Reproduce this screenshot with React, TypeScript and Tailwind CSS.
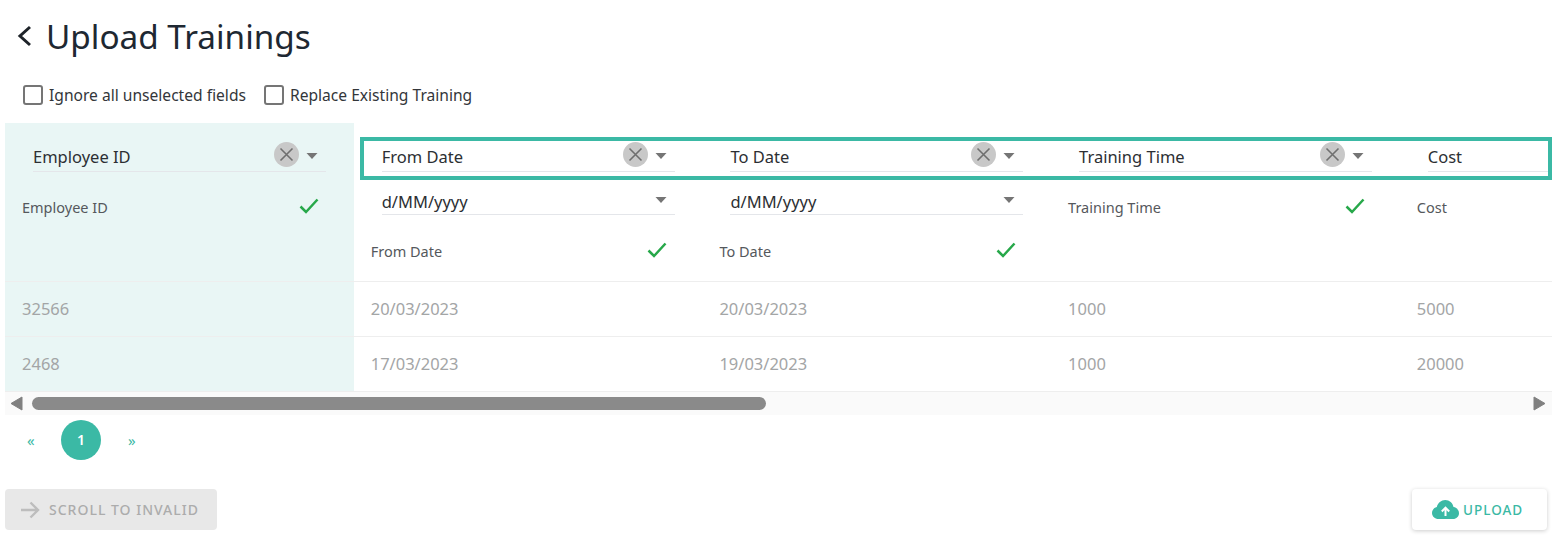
const columns = [
  { name: "Employee ID", format: "", rows: ["32566", "2468"], frozen: true },
  { name: "From Date", format: "d/MM/yyyy", rows: ["20/03/2023", "17/03/2023"] },
  { name: "To Date", format: "d/MM/yyyy", rows: ["20/03/2023", "19/03/2023"] },
  { name: "Training Time", format: "", rows: ["1000", "1000"] },
  { name: "Cost", format: "", rows: ["5000", "20000"], noClear: true },
];

const Caret = () => (
  <svg width="12" height="6" viewBox="0 0 12 6" className="shrink-0">
    <path d="M0.500 0h11L6 6z" fill="#757575" />
  </svg>
);

const Check = () => (
  <svg width="20" height="16" viewBox="0 0 20 16" className="shrink-0">
    <path d="M1.500 8.500 7 14 18.500 1.500" fill="none" stroke="#27a84a" strokeWidth="2.500" />
  </svg>
);

const ClearIcon = () => (
  <span className="mb-[2px] flex h-[25px] w-[25px] shrink-0 items-center justify-center rounded-full bg-[#c8c8c8]">
    <svg width="15" height="15" viewBox="0 0 15 15">
      <path d="M1.500 1.500l12 12M13.500 1.500l-12 12" stroke="#6f6f6f" strokeWidth="1.600" fill="none" />
    </svg>
  </span>
);

const HeaderSelect = ({ value, clear }: { value: string; clear?: boolean }) => (
  <div className="ml-[28px] flex h-[32px] w-[293px] items-center border-b border-[#e4e6ea] pr-[8px] text-[16.500px] text-[#2c2f33]">
    <span className="flex-1 pt-[3px]">{value}</span>
    {clear && <ClearIcon />}
    <span className="ml-[7px] flex">
      <Caret />
    </span>
  </div>
);

const FormatSelect = ({ value }: { value: string }) => (
  <div className="ml-[28px] mt-[15px] flex h-[28px] w-[293px] items-center border-b border-[#e4e6ea] pr-[8px] pt-[3px] text-[16.500px] text-[#2c2f33]">
    <span className="flex-1">{value}</span>
    <span className="mb-[5px] flex">
      <Caret />
    </span>
  </div>
);

const Checkbox = ({ label }: { label: string }) => (
  <label className="flex items-center gap-[6px] text-[15.600px] text-[#33363a]">
    <span className="h-[20px] w-[20px] rounded-[3px] border-2 border-[#757575] bg-white" />
    <span className="pt-[2px]">{label}</span>
  </label>
);

const Column = ({ col }: { col: (typeof columns)[number] }) => (
  <div className={`w-[348.700px] shrink-0 ${col.frozen ? "bg-[#e9f6f5]" : "bg-white"}`}>
    <div className="h-[159px] border-b border-[#eeeeee] pt-[17px]">
      <HeaderSelect value={col.name} clear={!col.noClear} />
      {col.format && <FormatSelect value={col.format} />}
      <div
        className={`flex h-[44px] items-center justify-between pl-[17px] pr-[35px] text-[14.500px] text-[#55585c] ${
          col.format ? "mt-[15px]" : "mt-[14px]"
        }`}
      >
        <span>{col.name}</span>
        <span className="mb-[4px] flex">
          <Check />
        </span>
      </div>
    </div>
    {col.rows.map((row) => (
      <div
        key={row}
        className="flex h-[55px] items-center border-b border-[#eeeeee] pl-[17px] text-[16.500px] text-[#a3a5a6]"
      >
        {row}
      </div>
    ))}
  </div>
);

export default function App() {
  return (
    <div className="h-[538px] w-[1552px] overflow-hidden bg-white font-['Noto_Sans',sans-serif]">
      <div className="flex h-[73px] items-center pl-[17px]">
        <svg width="15" height="22" viewBox="0 0 15 22" className="mb-[2px]">
          <path d="M13 2 3 11l10 9" fill="none" stroke="#1e2329" strokeWidth="3" />
        </svg>
        <h1 className="ml-[14px] text-[33.300px] leading-none text-[#1e2832]">Upload Trainings</h1>
      </div>
      <div className="flex h-[44px] items-center gap-[18px] pl-[23px]">
        <Checkbox label="Ignore all unselected fields" />
        <Checkbox label="Replace Existing Training" />
      </div>
      <div className="relative ml-[5px] mt-[6px] w-[1547px] overflow-hidden">
        <div className="flex">
          {columns.map((col) => (
            <Column key={col.name} col={col} />
          ))}
        </div>
        <div className="absolute left-[355px] top-[14px] h-[43px] w-[1192px] border-[4px] border-[#3bb9a5]" />
      </div>
      <div className="ml-[5px] flex h-[23px] w-[1547px] items-center bg-[#fafafa]">
        <svg width="13" height="15" viewBox="0 0 13 15" className="ml-[5px]">
          <path d="M12 1v13L1 7.500z" fill="#808080" stroke="#808080" strokeLinejoin="round" />
        </svg>
        <div className="ml-[9px] h-[13px] w-[734px] rounded-full bg-[#8a8a8a]" />
        <svg width="13" height="15" viewBox="0 0 13 15" className="ml-auto mr-[6px]">
          <path d="M1 1v13l11-6.500z" fill="#808080" stroke="#808080" strokeLinejoin="round" />
        </svg>
      </div>
      <div className="mt-[4px] flex h-[41px] items-center text-[15px] text-[#3bb9a5]">
        <span className="ml-[27px] w-[34px] pt-[1px]">«</span>
        <span className="flex h-[40px] w-[40px] items-center justify-center rounded-full bg-[#3bb9a5] text-[14px] font-semibold text-white">
          1
        </span>
        <span className="ml-[27px] pt-[1px]">»</span>
      </div>
      <div className="mt-[29px] flex items-start justify-between pl-[5px] pr-[5px]">
        <button className="flex h-[41px] w-[212px] items-center rounded-[4px] bg-[#e8e8e8] pl-[15px] text-[14px] font-medium tracking-[1px] text-[#acacac]">
          <svg width="20" height="18" viewBox="0 0 20 18">
            <path d="M1 9h17M10.500 1.500 18 9l-7.500 7.500" fill="none" stroke="#bdbdbd" strokeWidth="2.400" />
          </svg>
          <span className="ml-[9px]">SCROLL TO INVALID</span>
        </button>
        <button className="flex h-[41px] w-[135px] items-center rounded-[4px] bg-white pl-[20px] text-[13.500px] font-medium tracking-[1px] text-[#3bb9a5] shadow-[0_1px_4px_rgba(0,0,0,0.2)]">
          <svg width="27" height="19" viewBox="0 0 27 19">
            <path
              d="M6.500 19C3 19 0 16.400 0 13c0-2.900 2-5.300 4.800-6C5.800 3 9.200 0 13.200 0c4.200 0 7.700 3.100 8.300 7.100C24.600 7.500 27 10 27 13.200 27 16.400 24.400 19 21 19z"
              fill="#3bb9a5"
            />
            <path d="M13.500 16V8.500M9.800 11.500l3.700-3.900 3.700 3.900" fill="none" stroke="#fff" strokeWidth="2" />
          </svg>
          <span className="ml-[4px] pt-[1px]">UPLOAD</span>
        </button>
      </div>
    </div>
  );
}
